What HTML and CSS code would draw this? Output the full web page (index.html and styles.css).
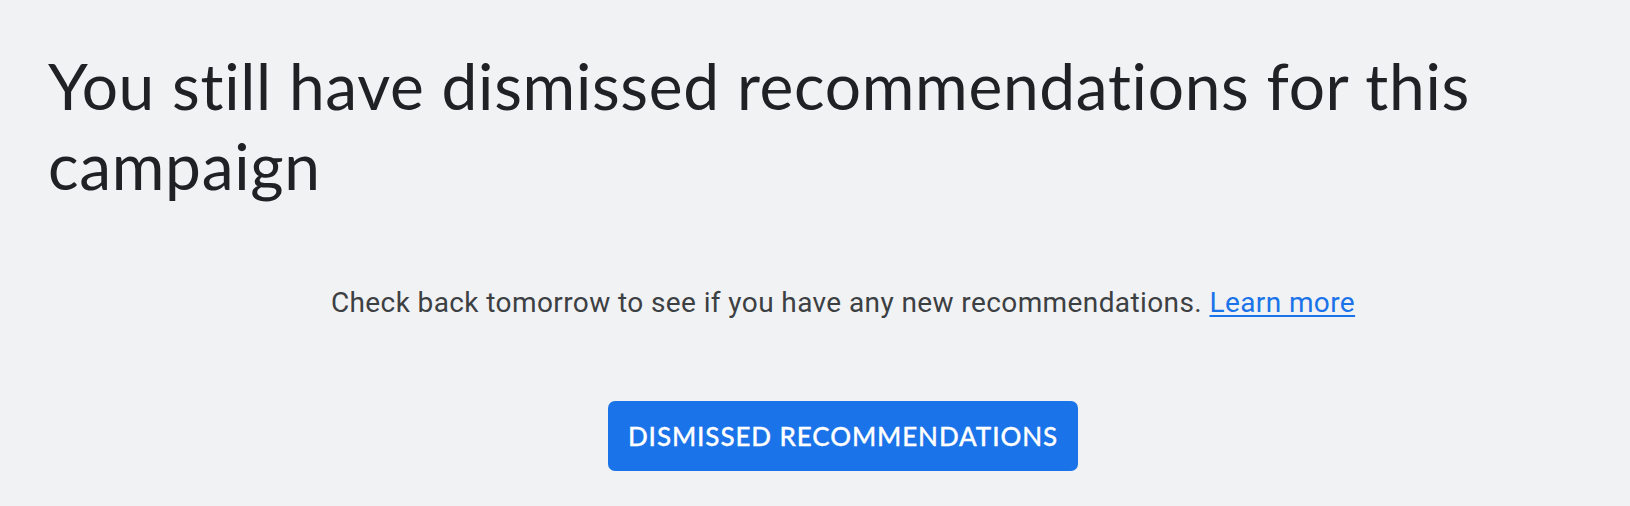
FILE: index.html
```html
<!DOCTYPE html>
<html lang="en">
<head>
    <meta charset="UTF-8">
    <meta name="viewport" content="width=device-width, initial-scale=1.0">
    <title>Recommendations</title>
    <link rel="stylesheet" href="styles.css">
</head>
<body>
    <main class="page">
        <h1 class="page-title">You still have dismissed recommendations for this campaign</h1>

        <div class="empty-state">
            <p class="empty-text">Check back tomorrow to see if you have any new recommendations. <a href="#" class="learn-link">Learn more</a></p>
            <button class="dismissed-btn" type="button">Dismissed recommendations</button>
        </div>
    </main>
</body>
</html>
```

FILE: styles.css
```css
* {
    box-sizing: border-box;
    margin: 0;
    padding: 0;
}
html, body {
    height: 100%;
}
body {
    background-color: #f1f2f4;
    font-family: Roboto, 'Noto Sans', sans-serif;
    color: #202124;
}
.page {
    padding: 46px 0 0 48px;
}
.page-title {
    font-family: Lato, 'Open Sans', sans-serif;
    font-weight: 400;
    font-size: 64px;
    line-height: 80px;
    letter-spacing: 0.7px;
    font-variant-ligatures: none;
    color: #202124;
    padding-right: 120px;
}
.empty-state {
    display: flex;
    flex-direction: column;
    align-items: center;
    padding-left: 8px;
    margin-top: 77px;
}
.empty-text {
    font-size: 28px;
    line-height: 40px;
    letter-spacing: 0.4px;
    color: #3c4043;
}
.learn-link {
    color: #1a73e8;
    text-decoration: underline;
    text-underline-offset: 3px;
}
.dismissed-btn {
    margin-top: 78px;
    height: 70px;
    padding: 0 20px;
    border: none;
    border-radius: 7px;
    background-color: #1a73e8;
    color: #fff;
    font-family: Lato, 'Open Sans', sans-serif;
    font-weight: 500;
    font-size: 26px;
    letter-spacing: 0.9px;
    text-transform: uppercase;
    -webkit-text-stroke: 0.3px #fff;
    cursor: pointer;
}
```
